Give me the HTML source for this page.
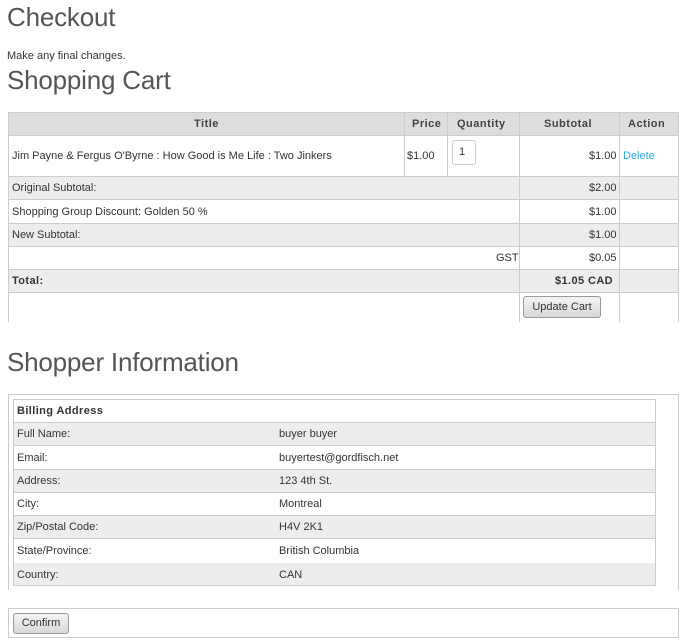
<!DOCTYPE html>
<html><head><style>
*{margin:0;padding:0;box-sizing:border-box}
body{width:685px;height:643px;background:#fff;font-family:"Liberation Sans",sans-serif;color:#333;font-size:11px;position:relative;overflow:hidden}
.a{position:absolute}
h1{position:absolute;font-weight:normal;color:#555;font-size:26px;letter-spacing:-0.2px;left:7px}
.r{position:absolute;left:8px;width:671px;border-left:1px solid #ccc;border-right:1px solid #ccc;border-bottom:1px solid #ccc}
.g{background:#ededed}
.c{position:absolute;top:0;bottom:0;border-left:1px solid #ccc}
.t{position:absolute;white-space:nowrap}
.btn{position:absolute;border:1px solid #999;border-radius:3px;background:linear-gradient(#f4f4f4,#d8d8d8);font-size:11px;color:#333;text-align:center}
</style></head><body>
<h1 style="top:2px">Checkout</h1>
<div class="t" style="left:7px;top:50px">Make any final changes.</div>
<h1 style="top:65px">Shopping Cart</h1>

<div class="r" style="top:112px;height:24px;background:#ddd;border-top:1px solid #ccc;font-weight:bold;color:#444;letter-spacing:0.5px">
 <div class="c" style="left:395px"></div><div class="c" style="left:438px"></div><div class="c" style="left:510px"></div><div class="c" style="left:610px"></div>
 <div class="t" style="left:185px;top:5px">Title</div>
 <div class="t" style="left:403px;top:5px">Price</div>
 <div class="t" style="left:448px;top:5px">Quantity</div>
 <div class="t" style="left:535px;top:5px">Subtotal</div>
 <div class="t" style="left:619px;top:5px">Action</div>
</div>
<div class="r" style="top:136px;height:41px">
 <div class="c" style="left:395px"></div><div class="c" style="left:438px"></div><div class="c" style="left:510px"></div><div class="c" style="left:610px"></div>
 <div class="t" style="left:3px;top:14px">Jim Payne &amp; Fergus O'Byrne : How Good is Me Life : Two Jinkers</div>
 <div class="t" style="left:398px;top:14px">$1.00</div>
 <div class="a" style="left:443px;top:4px;width:24px;height:25px;border:1px solid #ccc;border-radius:3px;padding:5px 0 0 6px">1</div>
 <div class="t" style="left:580px;top:14px">$1.00</div>
 <div class="t" style="left:614px;top:14px;color:#29a9e0">Delete</div>
</div>
<div class="r g" style="top:177px;height:23px"><div class="c" style="left:510px"></div><div class="c" style="left:610px"></div>
 <div class="t" style="left:3px;top:5px">Original Subtotal:</div><div class="t" style="left:580px;top:5px">$2.00</div></div>
<div class="r" style="top:200px;height:24px"><div class="c" style="left:510px"></div><div class="c" style="left:610px"></div>
 <div class="t" style="left:3px;top:6px">Shopping Group Discount: Golden 50 %</div><div class="t" style="left:580px;top:6px">$1.00</div></div>
<div class="r g" style="top:224px;height:23px"><div class="c" style="left:510px"></div><div class="c" style="left:610px"></div>
 <div class="t" style="left:3px;top:5px">New Subtotal:</div><div class="t" style="left:580px;top:5px">$1.00</div></div>
<div class="r" style="top:247px;height:23px"><div class="c" style="left:510px"></div><div class="c" style="left:610px"></div>
 <div class="t" style="left:487px;top:5px">GST</div><div class="t" style="left:580px;top:5px">$0.05</div></div>
<div class="r g" style="top:270px;height:23px;font-weight:bold;letter-spacing:0.4px"><div class="c" style="left:510px"></div><div class="c" style="left:610px"></div>
 <div class="t" style="left:3px;top:5px">Total:</div><div class="t" style="left:546px;top:5px">$1.05 CAD</div></div>
<div class="r" style="top:293px;height:29px;border-bottom:none"><div class="c" style="left:510px"></div><div class="c" style="left:610px"></div>
 <div class="btn" style="left:514px;top:3px;width:78px;height:22px;line-height:20px">Update Cart</div></div>

<h1 style="top:347px">Shopper Information</h1>
<div class="a" style="left:8px;top:394px;width:671px;height:196px;border:1px solid #ccc;border-bottom:none"></div>
<div class="a" style="left:13px;top:399px;width:643px;height:187px;border:1px solid #ccc"></div>
<div class="a" style="left:14px;top:400px;width:641px">
 <div style="height:23px;border-bottom:1px solid #ccc;font-weight:bold;padding:5px 3px;letter-spacing:0.4px">Billing Address</div>
 <div class="g" style="height:23px;border-bottom:1px solid #ccc;position:relative"><span class="t" style="left:3px;top:5px">Full Name:</span><span class="t" style="left:265px;top:5px">buyer buyer</span></div>
 <div style="height:24px;border-bottom:1px solid #ccc;position:relative"><span class="t" style="left:3px;top:6px">Email:</span><span class="t" style="left:265px;top:6px">buyertest@gordfisch.net</span></div>
 <div class="g" style="height:23px;border-bottom:1px solid #ccc;position:relative"><span class="t" style="left:3px;top:5px">Address:</span><span class="t" style="left:265px;top:5px">123 4th St.</span></div>
 <div style="height:23px;border-bottom:1px solid #ccc;position:relative"><span class="t" style="left:3px;top:5px">City:</span><span class="t" style="left:265px;top:5px">Montreal</span></div>
 <div class="g" style="height:23px;border-bottom:1px solid #ccc;position:relative"><span class="t" style="left:3px;top:5px">Zip/Postal Code:</span><span class="t" style="left:265px;top:5px">H4V 2K1</span></div>
 <div style="height:24px;position:relative"><span class="t" style="left:3px;top:6px">State/Province:</span><span class="t" style="left:265px;top:6px">British Columbia</span></div>
 <div class="g" style="height:22px;position:relative"><span class="t" style="left:3px;top:6px">Country:</span><span class="t" style="left:265px;top:6px">CAN</span></div>
</div>
<div class="a" style="left:8px;top:608px;width:671px;height:30px;border:1px solid #ccc"></div>
<div class="btn" style="left:13px;top:613px;width:56px;height:21px;line-height:19px">Confirm</div>
</body></html>
